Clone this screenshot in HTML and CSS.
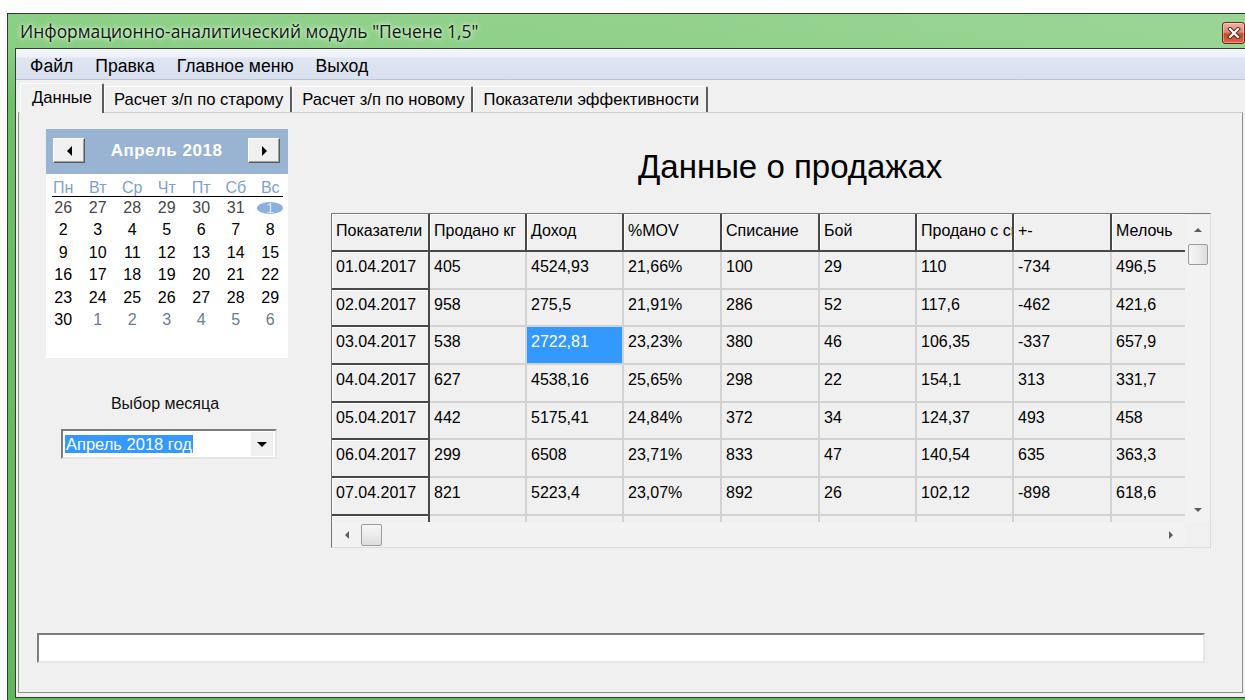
FILE: index.html
```html
<!DOCTYPE html>
<html lang="ru">
<head>
<meta charset="utf-8">
<title>Печене 1,5</title>
<link rel="stylesheet" href="styles.css">
</head>
<body>
<div class="window">
  <div class="titlebar">
    <span class="title">Информационно-аналитический модуль "Печене 1,5"</span>
    <span class="close-btn">
      <svg width="14" height="12" viewBox="0 0 14 12">
        <path d="M3 2 L11 10 M11 2 L3 10" stroke="#5a1e14" stroke-width="4" stroke-linecap="square"/>
        <path d="M3 2 L11 10 M11 2 L3 10" stroke="#ffffff" stroke-width="2.2" stroke-linecap="square"/>
      </svg>
    </span>
  </div>

  <div class="client">
    <div class="menubar">
      <span class="menu-item">Файл</span>
      <span class="menu-item">Правка</span>
      <span class="menu-item">Главное меню</span>
      <span class="menu-item">Выход</span>
    </div>

    <div class="tabstrip">
      <div class="tab tab-active">Данные</div>
      <div class="tab">Расчет з/п по старому</div>
      <div class="tab">Расчет з/п по новому</div>
      <div class="tab">Показатели эффективности</div>
    </div>

    <div class="tabpage">
      <div class="page-main">
        <div class="side">
          <div class="calendar">
            <div class="cal-head">
              <span class="cal-btn"><span class="tri-left"></span></span>
              <span class="cal-title">Апрель 2018</span>
              <span class="cal-btn"><span class="tri-right"></span></span>
            </div>
            <div class="cal-week">
              <span>Пн</span><span>Вт</span><span>Ср</span><span>Чт</span><span>Пт</span><span>Сб</span><span>Вс</span>
            </div>
            <div class="cal-rule"></div>
            <div class="cal-dates">
              <span class="d-prev">26</span><span class="d-prev">27</span><span class="d-prev">28</span><span class="d-prev">29</span><span class="d-prev">30</span><span class="d-prev">31</span><span><span class="d-today">1</span></span>
              <span>2</span><span>3</span><span>4</span><span>5</span><span>6</span><span>7</span><span>8</span>
              <span>9</span><span>10</span><span>11</span><span>12</span><span>13</span><span>14</span><span>15</span>
              <span>16</span><span>17</span><span>18</span><span>19</span><span>20</span><span>21</span><span>22</span>
              <span>23</span><span>24</span><span>25</span><span>26</span><span>27</span><span>28</span><span>29</span>
              <span>30</span><span class="d-next">1</span><span class="d-next">2</span><span class="d-next">3</span><span class="d-next">4</span><span class="d-next">5</span><span class="d-next">6</span>
            </div>
          </div>

          <div class="month-label">Выбор месяца</div>
          <div class="combo">
            <span class="combo-text">Апрель 2018 год</span>
            <span class="combo-btn"><span class="tri-down"></span></span>
          </div>
        </div>

        <div class="content">
          <h1 class="heading">Данные о продажах</h1>
          <div class="grid">
            <div class="grid-view">
              <table class="data-table">
                <colgroup>
                  <col class="c98"><col class="c97"><col class="c97"><col class="c98"><col class="c98"><col class="c97"><col class="c97"><col class="c98"><col class="c98">
                </colgroup>
                <thead>
                  <tr>
                    <th>Показатели</th><th>Продано кг</th><th>Доход</th><th>%MOV</th><th>Списание</th><th>Бой</th><th>Продано с склада</th><th>+-</th><th>Мелочь</th>
                  </tr>
                </thead>
                <tbody>
                  <tr><th>01.04.2017</th><td>405</td><td>4524,93</td><td>21,66%</td><td>100</td><td>29</td><td>110</td><td>-734</td><td>496,5</td></tr>
                  <tr><th>02.04.2017</th><td>958</td><td>275,5</td><td>21,91%</td><td>286</td><td>52</td><td>117,6</td><td>-462</td><td>421,6</td></tr>
                  <tr><th>03.04.2017</th><td>538</td><td class="cell-selected">2722,81</td><td>23,23%</td><td>380</td><td>46</td><td>106,35</td><td>-337</td><td>657,9</td></tr>
                  <tr><th>04.04.2017</th><td>627</td><td>4538,16</td><td>25,65%</td><td>298</td><td>22</td><td>154,1</td><td>313</td><td>331,7</td></tr>
                  <tr><th>05.04.2017</th><td>442</td><td>5175,41</td><td>24,84%</td><td>372</td><td>34</td><td>124,37</td><td>493</td><td>458</td></tr>
                  <tr><th>06.04.2017</th><td>299</td><td>6508</td><td>23,71%</td><td>833</td><td>47</td><td>140,54</td><td>635</td><td>363,3</td></tr>
                  <tr><th>07.04.2017</th><td>821</td><td>5223,4</td><td>23,07%</td><td>892</td><td>26</td><td>102,12</td><td>-898</td><td>618,6</td></tr>
                  <tr><th></th><td></td><td></td><td></td><td></td><td></td><td></td><td></td><td></td></tr>
                </tbody>
              </table>
            </div>
            <div class="vscroll">
              <span class="sb-arrow sb-arrow-top"><span class="tri-up-sm"></span></span>
              <span class="sb-thumb sb-thumb-v"></span>
              <span class="sb-fill"></span>
              <span class="sb-arrow sb-arrow-bottom"><span class="tri-down-sm"></span></span>
            </div>
            <div class="hscroll">
              <span class="sb-arrow sb-arrow-left"><span class="tri-left-sm"></span></span>
              <span class="sb-thumb sb-thumb-h"></span>
              <span class="sb-fill"></span>
              <span class="sb-arrow sb-arrow-right"><span class="tri-right-sm"></span></span>
            </div>
            <div class="sb-corner"></div>
          </div>
        </div>
      </div>

      <div class="status-box"></div>
    </div>
  </div>
</div>
</body>
</html>
```

FILE: styles.css
```css
* {
  box-sizing: border-box;
}

html,
body {
  margin: 0;
  padding: 0;
}

body {
  width: 1245px;
  height: 700px;
  overflow: hidden;
  background: #ffffff;
  font-family: "Liberation Sans", Arial, sans-serif;
  color: #000;
}

/* ---------- window frame ---------- */
.window {
  margin: 13px 0 0 7px;
  width: 1300px;
  height: 700px;
  border-top: 1px solid #2c3a2c;
  border-left: 1px solid #2c3a2c;
  padding-left: 7px;
  background: linear-gradient(180deg, #8ccf86 0, #89ce83 34px, #6cc066 90px, #5fb859 100%);
}

.titlebar {
  height: 34px;
  margin-left: -7px;
  padding-left: 12px;
  display: flex;
  align-items: center;
  background: linear-gradient(90deg, rgba(255, 255, 255, 0) 0, rgba(255, 255, 255, 0.08) 60%, rgba(255, 255, 255, 0.14) 100%);
}

.title {
  font-family: "Open Sans", "Noto Sans", sans-serif;
  font-size: 17.4px;
  color: #0c1a0c;
  white-space: nowrap;
  text-shadow: 0 0 6px rgba(255, 255, 255, 0.85), 0 0 3px rgba(255, 255, 255, 0.7);
}

.close-btn {
  align-self: flex-start;
  margin: 8px 62px 0 auto;
  width: 23px;
  height: 22px;
  border: 1px solid #6b2a1e;
  border-radius: 3px;
  background: linear-gradient(180deg, #eeb1a2 0, #de8b74 45%, #c9472c 55%, #d9674a 100%);
  box-shadow: inset 0 0 0 1px rgba(255, 255, 255, 0.35);
  display: flex;
  align-items: center;
  justify-content: center;
}

/* ---------- client area ---------- */
.client {
  width: 1231px;
  height: 650px;
  border: 1px solid #3a3a3a;
  background: #f0f0f0;
}

.menubar {
  height: 31px;
  padding: 4px 0 0 3px;
  display: flex;
  background: linear-gradient(180deg, #f5f7fb 0, #eef1f8 25%, #dee4f1 32%, #d9e0ef 100%);
  border-bottom: 1px solid #bcc4d6;
}

.menu-item {
  padding: 0 11px;
  font-size: 17.6px;
  line-height: 26px;
  white-space: nowrap;
}

/* ---------- tabs ---------- */
.tabstrip {
  height: 32px;
  padding-left: 4px;
  display: flex;
  align-items: flex-end;
}

.tab {
  height: 26px;
  padding: 0 7px 0 9px;
  font-size: 16.6px;
  line-height: 25px;
  white-space: nowrap;
  border-top: 1px solid #ffffff;
  border-left: 1px solid #ffffff;
  border-right: 2px solid #5c5c5c;
  border-radius: 2px 2px 0 0;
  background: #f0f0f0;
}

.tab-active {
  position: relative;
  z-index: 1;
  height: 30px;
  margin-bottom: -1px;
  padding: 0 10px 0 11px;
  line-height: 28px;
}

.tabpage {
  margin: 0 2px;
  height: 581px;
  border: 1px solid #8d8d8d;
  border-top-color: #d0d0d0;
  background: #f0f0f0;
}

.page-main {
  display: flex;
  align-items: flex-start;
}

/* ---------- calendar ---------- */
.side {
  width: 242px;
  margin: 16px 0 0 27px;
}

.calendar {
  width: 242px;
  height: 229px;
  background: #ffffff;
}

.cal-head {
  height: 45px;
  padding: 0 8px 2px 7px;
  display: flex;
  align-items: center;
  justify-content: space-between;
  background: #99b4d2;
}

.cal-btn {
  width: 32px;
  height: 25px;
  display: flex;
  align-items: center;
  justify-content: center;
  background: #f0f0f0;
  border: 1px solid;
  border-color: #ffffff #5a5a5a #5a5a5a #ffffff;
  box-shadow: inset -1px -1px 0 #a0a0a0;
}

.tri-left {
  width: 0;
  height: 0;
  border-top: 5px solid transparent;
  border-bottom: 5px solid transparent;
  border-right: 5px solid #000;
}

.tri-right {
  width: 0;
  height: 0;
  border-top: 5px solid transparent;
  border-bottom: 5px solid transparent;
  border-left: 5px solid #000;
}

.cal-title {
  color: #ffffff;
  font-weight: bold;
  font-size: 17px;
  letter-spacing: 0.5px;
}

.cal-week,
.cal-dates {
  display: grid;
  grid-template-columns: repeat(7, 34.5px);
  text-align: center;
}

.cal-week {
  height: 22px;
  padding-top: 4px;
  font-size: 16px;
  line-height: 20px;
  color: #7ea2cc;
}

.cal-rule {
  margin: 0 5px 0 6px;
  border-top: 1px solid #000;
}

.cal-dates {
  grid-auto-rows: 22.4px;
  font-size: 16px;
  line-height: 22px;
}

.d-prev {
  color: #474747;
}

.d-next {
  color: #6d7b8a;
}

.d-today {
  display: inline-block;
  width: 26px;
  height: 12px;
  margin-top: 5px;
  border-radius: 50%;
  background: #8cb0db;
  color: #d8e5f4;
  font-size: 14px;
  line-height: 12px;
  vertical-align: top;
}

.month-label {
  margin-top: 36px;
  padding-right: 4px;
  text-align: center;
  font-size: 16px;
  line-height: 20px;
  color: #111;
}

.combo {
  margin: 15px 0 0 15px;
  width: 216px;
  height: 30px;
  display: flex;
  align-items: flex-start;
  background: #ffffff;
  border: 2px solid;
  border-color: #7c7c7c #e6e6e6 #e6e6e6 #7c7c7c;
}

.combo-text {
  margin: 4px 0 0 2px;
  padding: 0 1px;
  height: 18px;
  background: #3399ff;
  color: #ffffff;
  font-size: 16.5px;
  line-height: 18px;
  white-space: nowrap;
}

.combo-btn {
  margin: 1px 2px 0 auto;
  width: 22px;
  height: 24px;
  display: flex;
  align-items: center;
  justify-content: center;
  background: #f0f0f0;
}

.tri-down {
  width: 0;
  height: 0;
  border-left: 5px solid transparent;
  border-right: 5px solid transparent;
  border-top: 5px solid #000;
}

/* ---------- data grid ---------- */
.content {
  margin: 34px 0 0 43px;
}

.heading {
  margin: 0 0 26px 307px;
  font-size: 33px;
  line-height: 40px;
  font-weight: normal;
  white-space: nowrap;
}

.grid {
  width: 880px;
  height: 335px;
  display: grid;
  grid-template-columns: 853px 25px;
  grid-template-rows: 308px 25px;
  border: 1px solid;
  border-color: #777777 #dcdcdc #dcdcdc #777777;
  background: #f0f0f0;
}

.grid-view {
  overflow: hidden;
}

.data-table {
  width: 878px;
  table-layout: fixed;
  border-collapse: separate;
  border-spacing: 0;
}

.c98 {
  width: 98px;
}

.c97 {
  width: 97px;
}

.data-table th,
.data-table td {
  height: 37.7px;
  padding: 5px 1px 0 4px;
  vertical-align: top;
  text-align: left;
  font-weight: normal;
  font-size: 16px;
  line-height: 20px;
  white-space: nowrap;
  overflow: hidden;
  background: #f0f0f0;
  border-right: 2px solid #d2d2d2;
  border-bottom: 2px solid #d2d2d2;
}

.data-table thead th {
  height: 38px;
  padding-top: 7px;
}

.data-table th {
  border-right-color: #484848;
  border-bottom-color: #484848;
  box-shadow: inset 1px 1px 0 #ffffff;
}

.data-table td.cell-selected {
  background: #3399ff;
  color: #ffffff;
}

/* ---------- scroll bars ---------- */
.vscroll,
.hscroll {
  display: flex;
  align-items: center;
  background: #f2f2f2;
}

.vscroll {
  flex-direction: column;
}

.sb-fill {
  flex: 1;
}

.sb-arrow {
  display: flex;
  align-items: center;
  justify-content: center;
}

.sb-arrow-top {
  height: 30px;
  width: 25px;
  padding-top: 2px;
}

.sb-arrow-bottom {
  height: 25px;
  width: 25px;
}

.sb-arrow-left,
.sb-arrow-right {
  width: 29px;
  height: 25px;
}

.sb-thumb {
  border: 1px solid #9c9c9c;
  border-radius: 2px;
}

.sb-thumb-v {
  width: 20px;
  height: 21px;
  margin-left: 1px;
  background: linear-gradient(90deg, #f6f6f6 0, #ececec 50%, #dddddd 100%);
}

.sb-thumb-h {
  width: 21px;
  height: 22px;
  background: linear-gradient(180deg, #f6f6f6 0, #ececec 50%, #dddddd 100%);
}

.tri-up-sm,
.tri-down-sm,
.tri-left-sm,
.tri-right-sm {
  width: 0;
  height: 0;
}

.tri-up-sm {
  border-left: 4px solid transparent;
  border-right: 4px solid transparent;
  border-bottom: 4px solid #5e5e5e;
}

.tri-down-sm {
  border-left: 4px solid transparent;
  border-right: 4px solid transparent;
  border-top: 4px solid #5e5e5e;
}

.tri-left-sm {
  border-top: 4px solid transparent;
  border-bottom: 4px solid transparent;
  border-right: 4px solid #5e5e5e;
}

.tri-right-sm {
  border-top: 4px solid transparent;
  border-bottom: 4px solid transparent;
  border-left: 4px solid #5e5e5e;
}

.sb-corner {
  background: #f0f0f0;
}

/* ---------- status line ---------- */
.status-box {
  margin: 85px 0 0 18px;
  width: 1168px;
  height: 30px;
  background: #ffffff;
  border: 2px solid;
  border-color: #7c7c7c #e6e6e6 #e6e6e6 #7c7c7c;
}
```
